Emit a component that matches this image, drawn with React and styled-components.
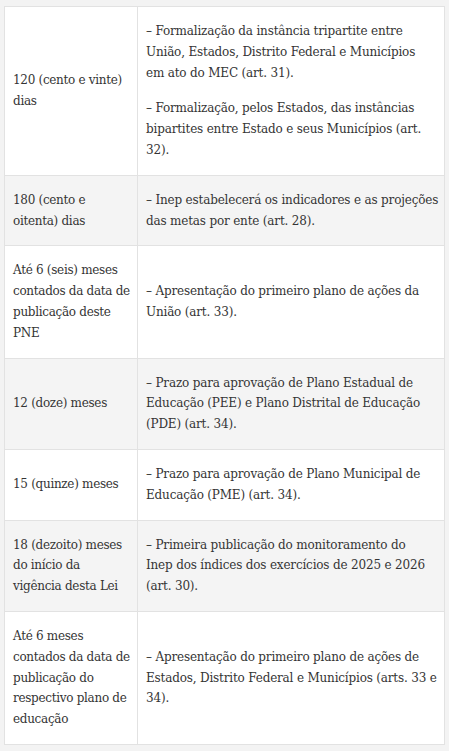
import React from "react";
import styled, { createGlobalStyle } from "styled-components";

const Global = createGlobalStyle`
  html, body { margin: 0; padding: 0; background: #f3f3f3; }
  body { font-family: "DejaVu Serif", "Liberation Serif", serif; color: #343434; }
`;

const Page = styled.div`
  padding: 6px 4px 5px 4px;
`;

const Table = styled.table`
  width: 441px;
  border-collapse: collapse;
  table-layout: fixed;
  border: 1px solid #e2e2e2;
  font-size: 12px;
  line-height: 20.8px;
`;

const Row = styled.tr`
  background: ${(p) => (p.$shaded ? "#f4f4f4" : "#ffffff")};
`;

const Cell = styled.td`
  border: 1px solid #e2e2e2;
  padding: 14px 8px;
  vertical-align: middle;
  width: ${(p) => (p.$first ? "116px" : "auto")};
  letter-spacing: ${(p) => (p.$first ? "-0.3px" : "-0.18px")};
`;

const Para = styled.p`
  margin: 0;
  & + & { margin-top: 15px; }
`;

const Line = styled.span`
  display: block;
  white-space: nowrap;
`;

const rows = [
  {
    when: ["120 (cento e vinte)", "dias"],
    what: [
      [
        "– Formalização da instância tripartite entre",
        "União, Estados, Distrito Federal e Municípios",
        "em ato do MEC (art. 31).",
      ],
      [
        "– Formalização, pelos Estados, das instâncias",
        "bipartites entre Estado e seus Municípios (art.",
        "32).",
      ],
    ],
  },
  {
    when: ["180 (cento e", "oitenta) dias"],
    what: [["– Inep estabelecerá os indicadores e as projeções", "das metas por ente (art. 28)."]],
  },
  {
    when: ["Até 6 (seis) meses", "contados da data de", "publicação deste", "PNE"],
    what: [["– Apresentação do primeiro plano de ações da", "União (art. 33)."]],
  },
  {
    when: ["12 (doze) meses"],
    what: [
      [
        "– Prazo para aprovação de Plano Estadual de",
        "Educação (PEE) e Plano Distrital de Educação",
        "(PDE) (art. 34).",
      ],
    ],
  },
  {
    when: ["15 (quinze) meses"],
    what: [["– Prazo para aprovação de Plano Municipal de", "Educação (PME) (art. 34)."]],
  },
  {
    when: ["18 (dezoito) meses", "do início da", "vigência desta Lei"],
    what: [
      [
        "– Primeira publicação do monitoramento do",
        "Inep dos índices dos exercícios de 2025 e 2026",
        "(art. 30).",
      ],
    ],
  },
  {
    when: ["Até 6 meses", "contados da data de", "publicação do", "respectivo plano de", "educação"],
    what: [
      [
        "– Apresentação do primeiro plano de ações de",
        "Estados, Distrito Federal e Municípios (arts. 33 e",
        "34).",
      ],
    ],
  },
];

export default function App() {
  return (
    <>
      <Global />
      <Page>
        <Table>
          <tbody>
            {rows.map((r, i) => (
              <Row key={i} $shaded={i % 2 === 1}>
                <Cell $first>
                  {r.when.map((l, k) => (
                    <Line key={k}>{l}</Line>
                  ))}
                </Cell>
                <Cell>
                  {r.what.map((p, j) => (
                    <Para key={j}>
                      {p.map((l, k) => (
                        <Line key={k}>{l}</Line>
                      ))}
                    </Para>
                  ))}
                </Cell>
              </Row>
            ))}
          </tbody>
        </Table>
      </Page>
    </>
  );
}
